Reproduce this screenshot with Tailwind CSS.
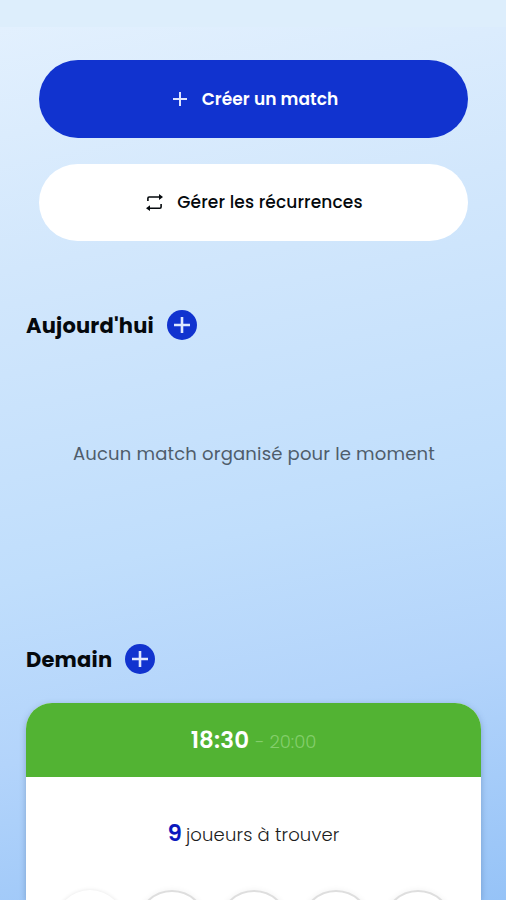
<!DOCTYPE html>
<html lang="fr">
<head>
    <meta charset="UTF-8">
    <meta name="viewport" content="width=device-width, initial-scale=1.0">
    <title>Mes matchs</title>
    <script src="https://cdn.jsdelivr.net/npm/@tailwindcss/browser@4"></script>
</head>
<body class="h-[900px] overflow-hidden bg-[linear-gradient(168deg,#e4f1fe_0%,#d2e7fc_27%,#c0defc_58%,#b3d4fb_76%,#96c3f7_100%)] font-['Poppins','Inter',sans-serif] text-[#05090d]">
    <!-- Status bar -->
    <div class="h-[27px] bg-[#ddeefc]"></div>

    <!-- Actions -->
    <div class="mt-[33.4px] flex flex-col gap-[26.4px] pl-[39px] pr-[38px]">
        <button class="flex h-[77.3px] items-center justify-center gap-[15px] rounded-full bg-[#1133cf] pl-[4px] text-white">
            <svg class="size-[14px]" viewBox="0 0 14 14" fill="none" stroke="#dfe5ff" stroke-width="2"><path d="M7 0v14M0 7h14"/></svg>
            <span class="pt-px text-[17px] font-semibold tracking-[0.05px]">Créer un match</span>
        </button>
        <button class="flex h-[77.3px] items-center justify-center gap-[14px] rounded-full bg-white pl-[2px]">
            <svg class="size-[17px]" viewBox="0 0 17 17" fill="none" stroke="currentColor" stroke-width="1.6">
                <path d="M1.9 7V4.2Q1.9 3 3.1 3H13.5M15.1 10v3Q15.1 14.2 13.9 14.2H3.5"/>
                <path d="M13 0L17 3l-4 3zM4 11.2L0 14.2l4 2.8z" fill="currentColor" stroke="none"/>
            </svg>
            <span class="pt-px text-[17px] font-medium tracking-[0.13px]">Gérer les récurrences</span>
        </button>
    </div>

    <!-- Aujourd'hui -->
    <div class="mt-[68.6px] flex h-[31px] items-center gap-[13px] pl-[26px]">
        <h2 class="text-[21px] font-bold tracking-[0.2px]">Aujourd'hui</h2>
        <button class="flex size-[30px] items-center justify-center rounded-full bg-[#1133cf]">
            <svg class="size-4" viewBox="0 0 16 16" fill="none" stroke="#dfe8ff" stroke-width="2.6"><path d="M8 0v16M0 8h16"/></svg>
        </button>
    </div>
    <p class="mt-[99px] pl-[2px] text-center text-[18px] leading-7 tracking-[0.18px] text-[#4f5d6b]">Aucun match organisé pour le moment</p>

    <!-- Demain -->
    <div class="mt-[176px] flex h-[31px] items-center gap-[13px] pl-[26px]">
        <h2 class="text-[21px] font-bold tracking-[0.2px]">Demain</h2>
        <button class="flex size-[30px] items-center justify-center rounded-full bg-[#1133cf]">
            <svg class="size-4" viewBox="0 0 16 16" fill="none" stroke="#dfe8ff" stroke-width="2.6"><path d="M8 0v16M0 8h16"/></svg>
        </button>
    </div>
    <div class="ml-[26px] mr-[25px] mt-[28px] h-[197px] overflow-hidden rounded-t-[26px] bg-white shadow-[0_2px_6px_rgba(50,80,130,0.35)]">
        <div class="flex h-[74px] items-baseline justify-center gap-[6px] bg-[#52b333] pt-[20.5px]">
            <span class="text-[23px] font-semibold tracking-[0.15px] text-white">18:30</span>
            <span class="text-[18px] font-light text-[#84ce6b]">- 20:00</span>
        </div>
        <div class="mt-[39.5px] flex h-9 items-baseline justify-center gap-[4px]">
            <span class="text-[23px] font-semibold text-[#0b18bd]">9</span>
            <span class="text-[18px] font-light tracking-[0.15px] text-[#1c1c1c]">joueurs à trouver</span>
        </div>
        <div class="mt-[37.5px] flex justify-center gap-[12px]">
            <div class="size-[70px] shrink-0 rounded-full bg-white shadow-[0_0_4px_rgba(0,0,0,0.1)]"></div>
            <div class="size-[70px] shrink-0 rounded-full border-2 border-[#dedede] bg-white shadow-[0_0_6px_rgba(0,0,0,0.06)]"></div>
            <div class="size-[70px] shrink-0 rounded-full border-2 border-[#dedede] bg-white shadow-[0_0_6px_rgba(0,0,0,0.06)]"></div>
            <div class="size-[70px] shrink-0 rounded-full border-2 border-[#dedede] bg-white shadow-[0_0_6px_rgba(0,0,0,0.06)]"></div>
            <div class="size-[70px] shrink-0 rounded-full border-2 border-[#dedede] bg-white shadow-[0_0_6px_rgba(0,0,0,0.06)]"></div>
        </div>
    </div>
</body>
</html>
